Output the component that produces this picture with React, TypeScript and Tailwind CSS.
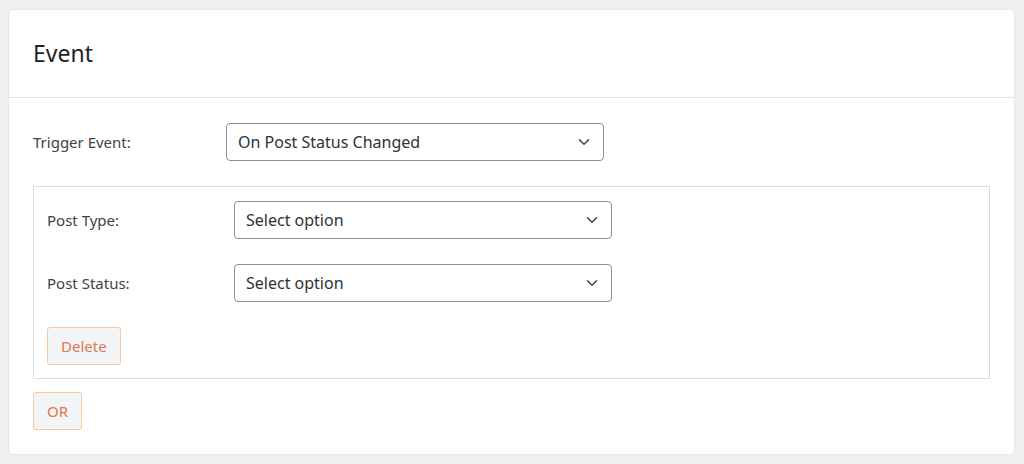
import { ChevronDown } from 'lucide-react';

const font = { fontFamily: '"Noto Sans", "Open Sans", sans-serif' };

const Select = ({ value }: { value: string }) => (
    <div className="flex h-[38px] w-[378px] items-center justify-between rounded-[4px] border border-[#8c8f94] bg-white pl-[11px] pr-[10px] text-[16px] text-[#2c3338]">
        <span>{value}</span>
        <ChevronDown className="h-[18px] w-[18px] text-[#3c434a]" strokeWidth={2} />
    </div>
);

const OrangeButton = ({ children }: { children: React.ReactNode }) => (
    <button className="flex h-[38px] items-center rounded-[3px] border border-[#f7c8a0] bg-[#f3f4f6] px-[13px] text-[15px] text-[#e0784e]">
        {children}
    </button>
);

const App = () => {
    return (
        <div className="min-h-[464px] w-[1024px] bg-[#f0f0f1] pl-[8px] pr-[9px] pt-[9px]" style={font}>
            <div className="h-[446px] rounded-[4px] border border-[#e6e6e6] bg-white">
                {/* Header */}
                <div className="flex h-[88px] items-center border-b border-[#e2e4e7] px-[24px]">
                    <h2 className="text-[23px] text-[#1d2327]">Event</h2>
                </div>

                <div className="px-[24px] pt-[25px]">
                    <div className="flex items-center">
                        <label className="w-[193px] text-[15px] text-[#3c434a]">Trigger Event:</label>
                        <Select value="On Post Status Changed" />
                    </div>

                    {/* Condition group */}
                    <div className="mt-[25px] h-[193px] border border-[#dcdcde] px-[13px] pt-[14px]">
                        <div className="flex items-center">
                            <label className="w-[187px] text-[15px] text-[#3c434a]">Post Type:</label>
                            <Select value="Select option" />
                        </div>
                        <div className="mt-[25px] flex items-center">
                            <label className="w-[187px] text-[15px] text-[#3c434a]">Post Status:</label>
                            <Select value="Select option" />
                        </div>
                        <div className="mt-[25px]">
                            <OrangeButton>Delete</OrangeButton>
                        </div>
                    </div>

                    <div className="mt-[13px]">
                        <OrangeButton>OR</OrangeButton>
                    </div>
                </div>
            </div>
        </div>
    );
};

export default App;
